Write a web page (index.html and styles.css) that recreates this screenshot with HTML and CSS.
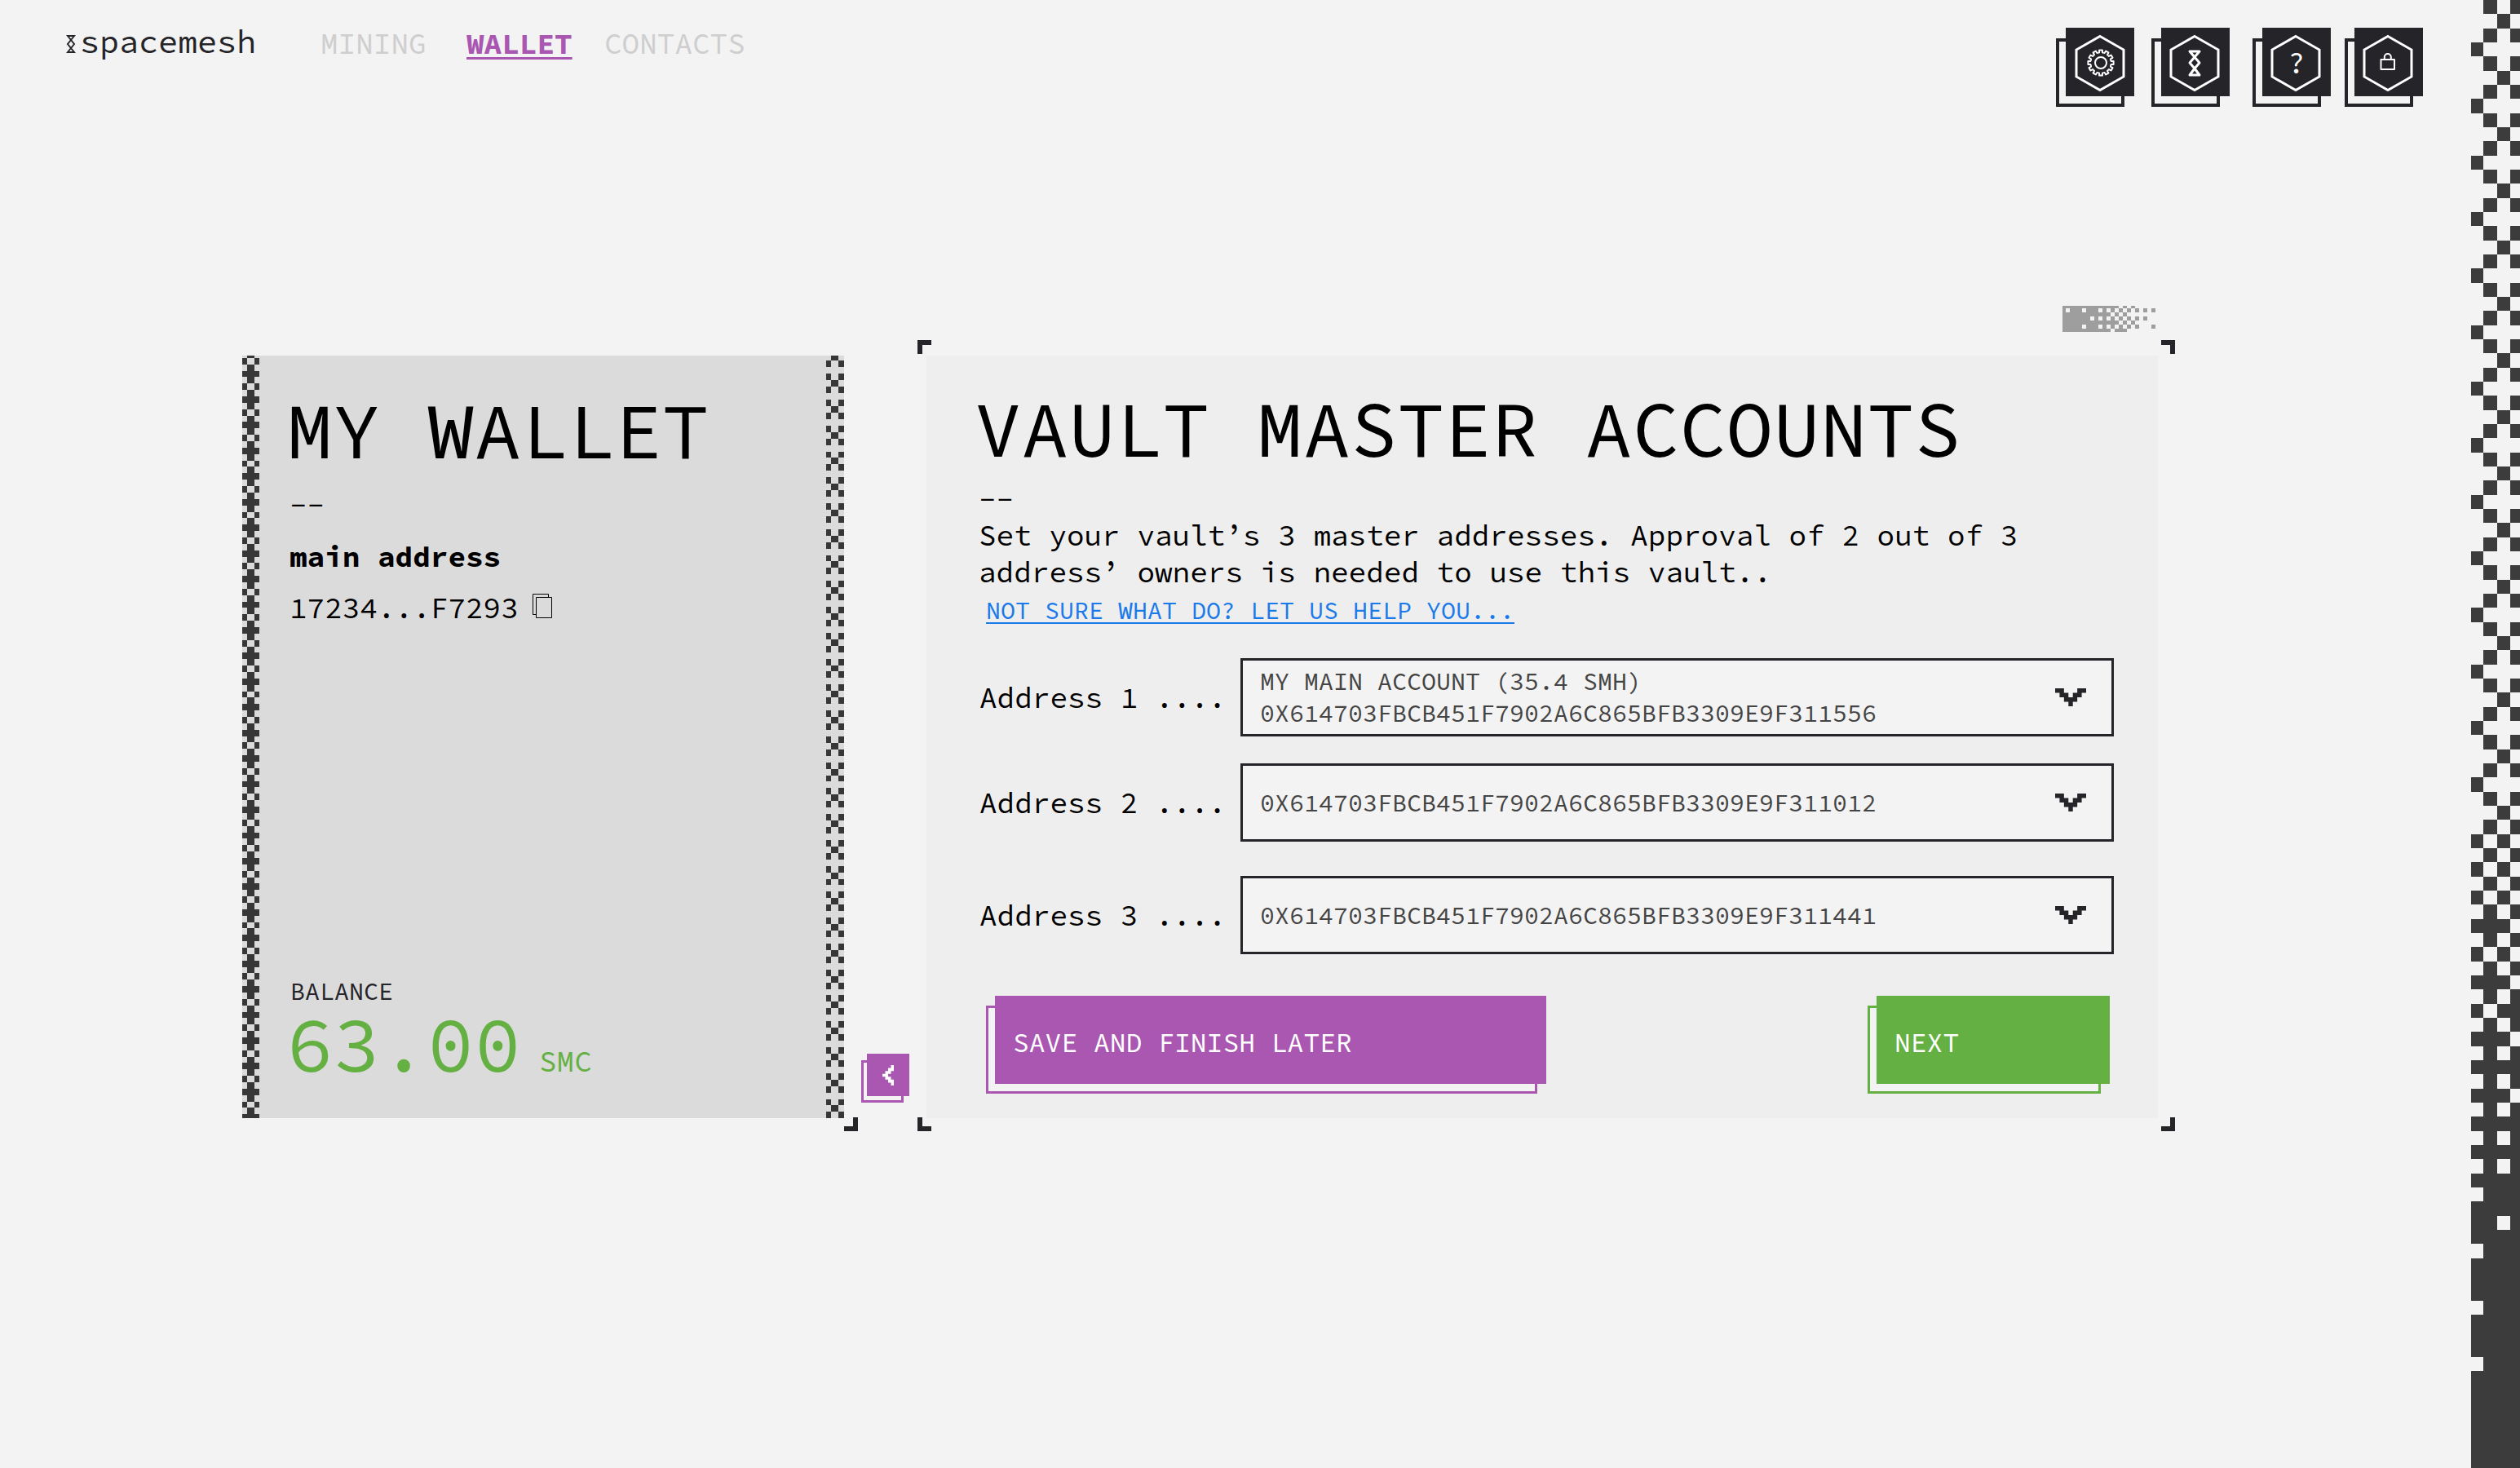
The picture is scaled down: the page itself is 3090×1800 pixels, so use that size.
FILE: index.html
```html
<!DOCTYPE html>
<html lang="en">
<head>
<meta charset="utf-8">
<meta name="viewport" content="width=device-width, initial-scale=1">
<title>Spacemesh – Vault master accounts</title>
<link rel="stylesheet" href="styles.css">
</head>
<body>
<div class="page">
  <header class="header">
    <a class="brand" href="#">
      <svg class="brand-mark" width="12" height="24" viewBox="0 0 12 24" aria-hidden="true">
        <path d="M2 2H10L6 7 2 12 6 17 10 22H2L6 17 10 12 6 7Z"/>
      </svg>
      <span class="brand-name">spacemesh</span>
    </a>
    <nav class="nav">
      <a class="nav-link" href="#">MINING</a>
      <a class="nav-link nav-link-active" href="#" aria-current="page">WALLET</a>
      <a class="nav-link" href="#">CONTACTS</a>
    </nav>
    <div class="tools">
      <button class="block-button tool" type="button" aria-label="Settings">
        <svg width="84" height="84" viewBox="0 0 84 84" aria-hidden="true">
          <path class="hex" d="M42 10.500 71 27V60L42 76.500 13 60V27Z"/>
          <g class="thin" transform="translate(43 43)">
            <circle r="7"/>
            <g id="tooth"><path d="M-3.3-12.1-2-12.6-1.9-15.6H1.9L2-12.6 3.3-12.1"/></g>
            <use href="#tooth" transform="rotate(30)"/><use href="#tooth" transform="rotate(60)"/>
            <use href="#tooth" transform="rotate(90)"/><use href="#tooth" transform="rotate(120)"/>
            <use href="#tooth" transform="rotate(150)"/><use href="#tooth" transform="rotate(180)"/>
            <use href="#tooth" transform="rotate(210)"/><use href="#tooth" transform="rotate(240)"/>
            <use href="#tooth" transform="rotate(270)"/><use href="#tooth" transform="rotate(300)"/>
            <use href="#tooth" transform="rotate(330)"/>
          </g>
        </svg>
      </button>
      <button class="block-button tool" type="button" aria-label="Network">
        <svg width="84" height="84" viewBox="0 0 84 84" aria-hidden="true">
          <path class="hex" d="M41 10.500 70 27V60L41 76.500 12 60V27Z"/>
          <path class="thin heavy" d="M35 29H47L41 36 35 43 41 50 47 58H35L41 50 47 43 41 36Z"/>
        </svg>
      </button>
      <button class="block-button tool" type="button" aria-label="Help">
        <svg width="84" height="84" viewBox="0 0 84 84" aria-hidden="true">
          <path class="hex" d="M41 10.500 70 27V60L41 76.500 12 60V27Z"/>
          <text class="mark" x="42" y="56" text-anchor="middle">?</text>
        </svg>
      </button>
      <button class="block-button tool" type="button" aria-label="Lock wallet">
        <svg width="84" height="84" viewBox="0 0 84 84" aria-hidden="true">
          <path class="hex" d="M41 10.500 70 27V60L41 76.500 12 60V27Z"/>
          <path class="thin" d="M32.5 39H49V51H32.5ZM36.8 39V36a4 4 0 0 1 8 0V39"/>
        </svg>
      </button>
    </div>
  </header>

  <main class="content">
    <section class="wallet">
      <div class="strip" data-pattern="dense"></div>
      <div class="wallet-body">
        <h1 class="title">MY WALLET</h1>
        <div class="wallet-info">
          <p class="text">--</p>
          <h2 class="text wallet-label">main address</h2>
          <p class="text wallet-address">17234...F7293
            <button class="copy" type="button" aria-label="Copy address">
              <svg width="26" height="32" viewBox="0 0 26 32" aria-hidden="true">
                <path d="M5 26.5H1.5V1.5H20.500V5.500M5.500 5.500H24.500V30.500H5.500Z"/>
              </svg>
            </button>
          </p>
        </div>
        <div class="balance">
          <p class="balance-label">BALANCE</p>
          <p class="balance-amount">63.00<span class="balance-unit">SMC</span></p>
        </div>
      </div>
      <div class="strip" data-pattern="sparse"></div>
      <i class="corner corner-se wallet-corner"></i>
    </section>

    <button class="block-button collapse" type="button" aria-label="Back">
      <svg width="14" height="25" viewBox="0 0 4 7" preserveAspectRatio="none" aria-hidden="true">
        <path d="M3 0H4V2H3V3H2V4H3V5H4V7H3V6H2V5H1V4H0V3H1V2H2V1H3Z"/>
      </svg>
    </button>

    <section class="vault">
      <div class="badge" data-pattern="badge"></div>
      <i class="corner corner-nw"></i>
      <i class="corner corner-ne"></i>
      <i class="corner corner-sw"></i>
      <i class="corner corner-se"></i>

      <h1 class="title">VAULT MASTER ACCOUNTS</h1>
      <div class="vault-body">
        <p class="text vault-dash">--</p>
        <p class="text">Set your vault’s 3 master addresses. Approval of 2 out of 3<br>address’ owners is needed to use this vault..</p>
        <a class="help-link" href="#">NOT SURE WHAT DO? LET US HELP YOU...</a>

        <form class="vault-form">
          <div class="fields">
            <div class="field">
              <label class="text" for="address1">Address 1 ....</label>
              <div class="picker">
                <select class="select select-named" id="address1">
                  <option>0X614703FBCB451F7902A6C865BFB3309E9F311556</option>
                </select>
                <span class="account-name">MY MAIN ACCOUNT (35.4 SMH)</span>
                <svg class="arrow" width="38" height="22" viewBox="0 0 7 4" preserveAspectRatio="none" aria-hidden="true"><path d="M0 0H2V1H3V2H4V1H5V0H7V1H6V2H5V3H4V4H3V3H2V2H1V1H0Z"/></svg>
              </div>
            </div>
            <div class="field">
              <label class="text" for="address2">Address 2 ....</label>
              <div class="picker">
                <select class="select" id="address2">
                  <option>0X614703FBCB451F7902A6C865BFB3309E9F311012</option>
                </select>
                <svg class="arrow" width="38" height="22" viewBox="0 0 7 4" preserveAspectRatio="none" aria-hidden="true"><path d="M0 0H2V1H3V2H4V1H5V0H7V1H6V2H5V3H4V4H3V3H2V2H1V1H0Z"/></svg>
              </div>
            </div>
            <div class="field">
              <label class="text" for="address3">Address 3 ....</label>
              <div class="picker">
                <select class="select" id="address3">
                  <option>0X614703FBCB451F7902A6C865BFB3309E9F311441</option>
                </select>
                <svg class="arrow" width="38" height="22" viewBox="0 0 7 4" preserveAspectRatio="none" aria-hidden="true"><path d="M0 0H2V1H3V2H4V1H5V0H7V1H6V2H5V3H4V4H3V3H2V2H1V1H0Z"/></svg>
              </div>
            </div>
          </div>
          <div class="actions">
            <button class="block-button action action-save" type="button">SAVE AND FINISH LATER</button>
            <button class="block-button action action-next" type="button">NEXT</button>
          </div>
        </form>
      </div>
    </section>
  </main>
</div>
<aside class="side" data-pattern="side"></aside>
<script src="patterns.js"></script>
</body>
</html>
```

FILE: styles.css
```css
* {
  box-sizing: border-box;
}

:root {
  --page: #f3f3f3;
  --ink: #242429;
  --purple: #a957b1;
  --green: #65b043;
}

body {
  margin: 0;
  min-height: 100vh;
  display: flex;
  background: var(--page);
  color: #000;
  font-family: "Source Code Pro", "Liberation Mono", monospace;
}

h1, h2, p {
  margin: 0;
  font-weight: 400;
}

button {
  padding: 0;
  border: 0;
  font: inherit;
  cursor: pointer;
}

svg {
  display: block;
}

.page {
  flex: 1;
  min-width: 0;
}

.side {
  flex: none;
  width: 60px;
  color: #3c3c3c;
}

/* Header */

.header {
  display: flex;
  align-items: flex-start;
  height: 436px;
  padding: 34px 59px 0 81px;
}

.brand {
  display: flex;
  align-items: center;
  gap: 5px;
  height: 40px;
  color: var(--ink);
  text-decoration: none;
}

.brand-mark {
  fill: none;
  stroke: currentColor;
  stroke-width: 2;
}

.brand-name {
  align-self: flex-start;
  font-size: 40px;
  line-height: 34px;
}

.nav {
  display: grid;
  grid-template-columns: 179px 169px auto;
  margin-left: 79px;
  font-size: 36px;
  line-height: 40px;
}

.nav-link {
  justify-self: start;
  color: #cecece;
  text-decoration: none;
}

.nav-link-active {
  color: var(--purple);
  font-weight: 700;
  text-decoration: underline;
  text-decoration-thickness: 3px;
  text-underline-offset: 4px;
}

.tools {
  display: grid;
  grid-template-columns: 117px 124px 113px 84px;
  margin-left: auto;
}

/* Solid block with an outlined shadow block behind it */

.block-button {
  position: relative;
  z-index: 0;
  background: none;
  color: #fff;
}

.block-button::before,
.block-button::after {
  content: "";
  position: absolute;
  inset: 0;
  z-index: -1;
  background: var(--block);
}

.block-button::before {
  inset: 12px 11px -12px -11px;
  border: 3px solid var(--block);
  background: var(--page);
}

.tool {
  --block: var(--ink);
  width: 84px;
  height: 84px;
}

.tool::before {
  inset: 13px 12px -13px -12px;
  border-width: 4px;
}

.hex,
.thin {
  fill: none;
  stroke: #fff;
}

.hex {
  stroke-width: 3;
}

.thin {
  stroke-width: 2;
  stroke-linejoin: round;
}

.heavy {
  stroke-width: 3;
}

.mark {
  fill: #fff;
  font-size: 36px;
}

/* Cards */

.content {
  display: grid;
  grid-template-columns: 738fr 101px 1510fr;
  min-height: 935px;
  padding: 0 384px 0 297px;
}

.title {
  font-size: 96px;
  line-height: 100px;
}

.text {
  font-size: 36px;
  line-height: 45px;
}

.wallet {
  position: relative;
  display: flex;
  background: #dbdbdb;
}

.strip {
  flex: none;
  width: 22px;
  color: #373737;
}

.wallet-body {
  flex: 1;
  display: flex;
  flex-direction: column;
  padding: 42px 0 46px 32px;
}

.wallet-info {
  padding: 19px 0 0 4px;
}

.wallet-label {
  margin-top: 18px;
  font-weight: 700;
}

.wallet-address {
  display: flex;
  align-items: flex-start;
  gap: 16px;
  margin-top: 18px;
}

.copy {
  padding-top: 4px;
  background: none;
}

.copy path {
  fill: none;
  stroke: #000;
  stroke-width: 1;
}

.balance {
  margin-top: auto;
}

.balance-label {
  margin-bottom: 2px;
  padding-left: 5px;
  color: var(--ink);
  font-size: 30px;
  line-height: 36px;
}

.balance-amount {
  color: var(--green);
  font-size: 96px;
  line-height: 90px;
}

.balance-unit {
  margin-left: 22px;
  font-size: 36px;
  line-height: 36px;
}

.collapse {
  --block: var(--purple);
  align-self: end;
  width: 52px;
  height: 52px;
  margin: 0 0 27px 28px;
}

.collapse::before {
  inset: 8px 7px -8px -7px;
}

.collapse svg {
  margin: 0 auto;
  fill: #fff;
}

.corner {
  position: absolute;
  width: 17px;
  height: 17px;
  border: 0 solid var(--ink);
}

.corner-nw {
  top: -19px;
  left: -11px;
  border-width: 6px 0 0 6px;
}

.corner-ne {
  top: -19px;
  right: -21px;
  border-width: 6px 6px 0 0;
}

.corner-sw {
  bottom: -16px;
  left: -11px;
  border-width: 0 0 6px 6px;
}

.corner-se {
  bottom: -16px;
  right: -21px;
  border-width: 0 6px 6px 0;
}

.wallet-corner {
  right: -17px;
}

.badge {
  position: absolute;
  top: -61px;
  right: 3px;
  width: 114px;
  height: 32px;
  color: #9e9e9e;
}

.vault {
  position: relative;
  padding: 40px 54px 42px 59px;
  background: #eee;
}

.vault-body {
  padding: 16px 0 0 5px;
}

.vault-dash {
  line-height: 42px;
}

.help-link {
  display: block;
  width: fit-content;
  margin: 6px 0 0 9px;
  color: #1a7aea;
  font-size: 30px;
  line-height: 36px;
  text-decoration-thickness: 2px;
  text-underline-offset: 4px;
}

.fields {
  display: grid;
  grid-template-rows: 129px 138px 96px;
  align-items: start;
  margin-top: 41px;
}

.field {
  display: grid;
  grid-template-columns: 320px 1fr;
  align-items: center;
  padding-left: 1px;
}

.picker {
  display: grid;
  align-items: center;
}

.picker > * {
  grid-area: 1 / 1;
}

.select {
  appearance: none;
  width: 100%;
  height: 96px;
  padding: 0 80px 0 21px;
  border: 3px solid var(--ink);
  border-radius: 0;
  background: var(--page);
  color: #444;
  font: inherit;
  font-size: 30px;
}

.select-named {
  padding-top: 38px;
}

.account-name {
  align-self: start;
  padding: 10px 0 0 24px;
  color: #444;
  font-size: 30px;
  line-height: 36px;
  pointer-events: none;
}

.arrow {
  justify-self: end;
  margin-right: 34px;
  fill: var(--ink);
  pointer-events: none;
}

.actions {
  display: flex;
  justify-content: space-between;
  margin-top: 51px;
  padding: 0 5px 0 20px;
}

.action {
  height: 108px;
  padding: 6px 22px 0;
  font-size: 33px;
  text-align: left;
}

.action-save {
  --block: var(--purple);
  width: 676px;
}

.action-next {
  --block: var(--green);
  width: 286px;
}
```

FILE: patterns.js
```js
// Pixel patterns: "#" is a filled cell, "." an empty one.
// cols holds the column edges; rows start at `offset` and are `height` tall.
const repeat = (rows, times) => Array(times).fill(rows).flat();

const patterns = {
  dense: {
    cols: [0, 6, 15, 21],
    height: 7.86,
    offset: -5,
    rows: [".#.", "#.#", ".#.", "###"],
    loop: true,
  },
  sparse: {
    cols: [0, 6, 15, 22],
    height: 7.94,
    offset: -1.6,
    rows: [".#.", "#.#", "...", "#.#"],
    loop: true,
  },
  badge: {
    cols: Array.from({ length: 24 }, (_, i) => Math.max(0, i * 5 - 1)),
    height: 5,
    offset: -2,
    rows: [
      "##############.#.#",
      "#.###.###.#.#.#.#.#.#.#",
      "############.#.#",
      "#######.#.#.#.#.#.#.#",
      "##############.#.#",
      "#####.###.#.#.#.#.#...#",
      "############.###",
    ],
  },
  side: {
    cols: [0, 15, 32, 48, 60],
    height: 17.333,
    offset: 0,
    rows: [
      ...repeat([".#.#", "..#.", ".#.#", "#..."], 14),
      ".#.#", "..#.",
      ...repeat([".#.#", "#.#."], 3),
      ".#.#", "###.", ".#.#", "#.#.", ".#.#", "###.", ".#.#", "#.##",
      ".#.#", "###.", ".#.#", "####", ".#.#", "###.", ".#.#", "####",
      ".#.#", "####", ".#.#", "####", ".###", "####", "##.#", "####",
      ".###", "####", "####", "####", ".###", "####", "####", "####",
      ".###", "####",
    ],
  },
};

function draw(box) {
  const { cols, height, offset, rows, loop } = patterns[box.dataset.pattern];
  const total = box.clientHeight;
  let d = "";
  for (let r = 0; offset + r * height < total; r++) {
    const row = loop ? rows[r % rows.length] : rows[r] ?? (box.dataset.pattern === "side" ? "####" : "");
    const top = Math.max(0, Math.round(offset + r * height));
    const bottom = Math.min(total, Math.round(offset + (r + 1) * height));
    for (let c = 0; c < row.length; c++) {
      if (row[c] === "#") d += `M${cols[c]} ${top}H${cols[c + 1]}V${bottom}H${cols[c]}Z`;
    }
  }
  const width = cols[cols.length - 1];
  box.innerHTML = `<svg width="${width}" height="${total}" aria-hidden="true"><path fill="currentColor" d="${d}"/></svg>`;
}

document.querySelectorAll("[data-pattern]").forEach(draw);
```
